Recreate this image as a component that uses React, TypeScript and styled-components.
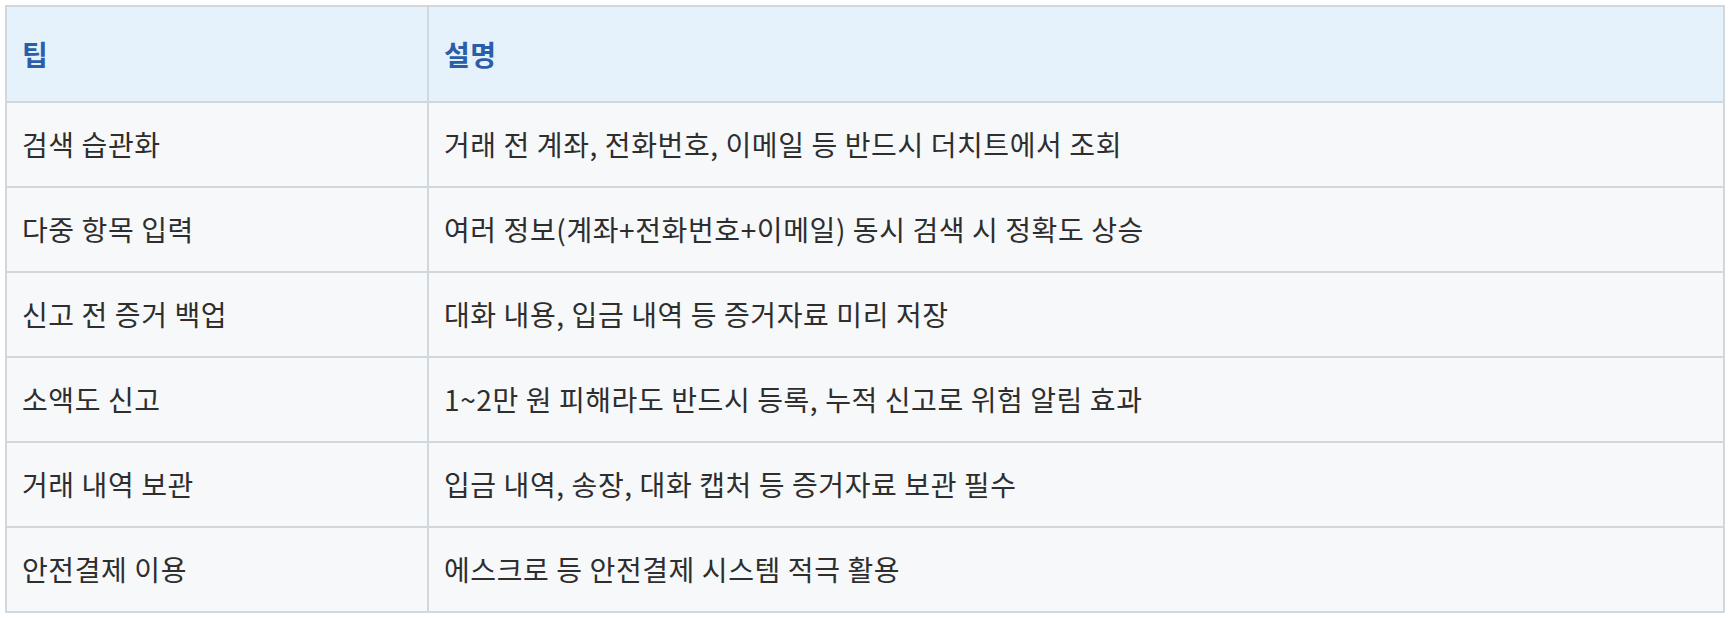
import React from 'react';
import styled, {createGlobalStyle} from 'styled-components';

const GlobalStyle = createGlobalStyle`
    html, body {
        margin: 0;
        padding: 0;
        background: #ffffff;
    }
    body {
        font-family: "Noto Sans CJK KR", "Noto Sans", sans-serif;
    }
`;

const Page = styled.div`
    padding: 5px;
`;

const Table = styled.table`
    box-sizing: border-box;
    width: 1720px;
    border-collapse: separate;
    border-spacing: 0;
    border-top: 2px solid #d0d8de;
    border-left: 2px solid #d0d8de;
    font-size: 28px;
    letter-spacing: 0.6px;
`;

const HeadCell = styled.th<{first?: boolean}>`
    box-sizing: border-box;
    width: ${({first}) => (first ? '422px' : 'auto')};
    padding: 27px 15px;
    line-height: 40px;
    text-align: left;
    font-weight: 700;
    color: #2a5ea8;
    background: #e5f1fb;
    border-right: 2px solid #d0d8de;
    border-bottom: 2px solid #d0d8de;
`;

const Cell = styled.td`
    box-sizing: border-box;
    padding: 21px 15px;
    line-height: 41px;
    color: #2e2e2e;
    background: #f6f8fa;
    border-right: 2px solid #d0d8de;
    border-bottom: 2px solid #d0d8de;
`;

const tips = [
    {tip: '검색 습관화', desc: '거래 전 계좌, 전화번호, 이메일 등 반드시 더치트에서 조회'},
    {tip: '다중 항목 입력', desc: '여러 정보(계좌+전화번호+이메일) 동시 검색 시 정확도 상승'},
    {tip: '신고 전 증거 백업', desc: '대화 내용, 입금 내역 등 증거자료 미리 저장'},
    {tip: '소액도 신고', desc: '1~2만 원 피해라도 반드시 등록, 누적 신고로 위험 알림 효과'},
    {tip: '거래 내역 보관', desc: '입금 내역, 송장, 대화 캡처 등 증거자료 보관 필수'},
    {tip: '안전결제 이용', desc: '에스크로 등 안전결제 시스템 적극 활용'},
];

export default function App() {
    return (
        <Page>
            <GlobalStyle />
            <Table>
                <thead>
                    <tr>
                        <HeadCell first>팁</HeadCell>
                        <HeadCell>설명</HeadCell>
                    </tr>
                </thead>
                <tbody>
                    {tips.map((row) => (
                        <tr key={row.tip}>
                            <Cell>{row.tip}</Cell>
                            <Cell>{row.desc}</Cell>
                        </tr>
                    ))}
                </tbody>
            </Table>
        </Page>
    );
}
